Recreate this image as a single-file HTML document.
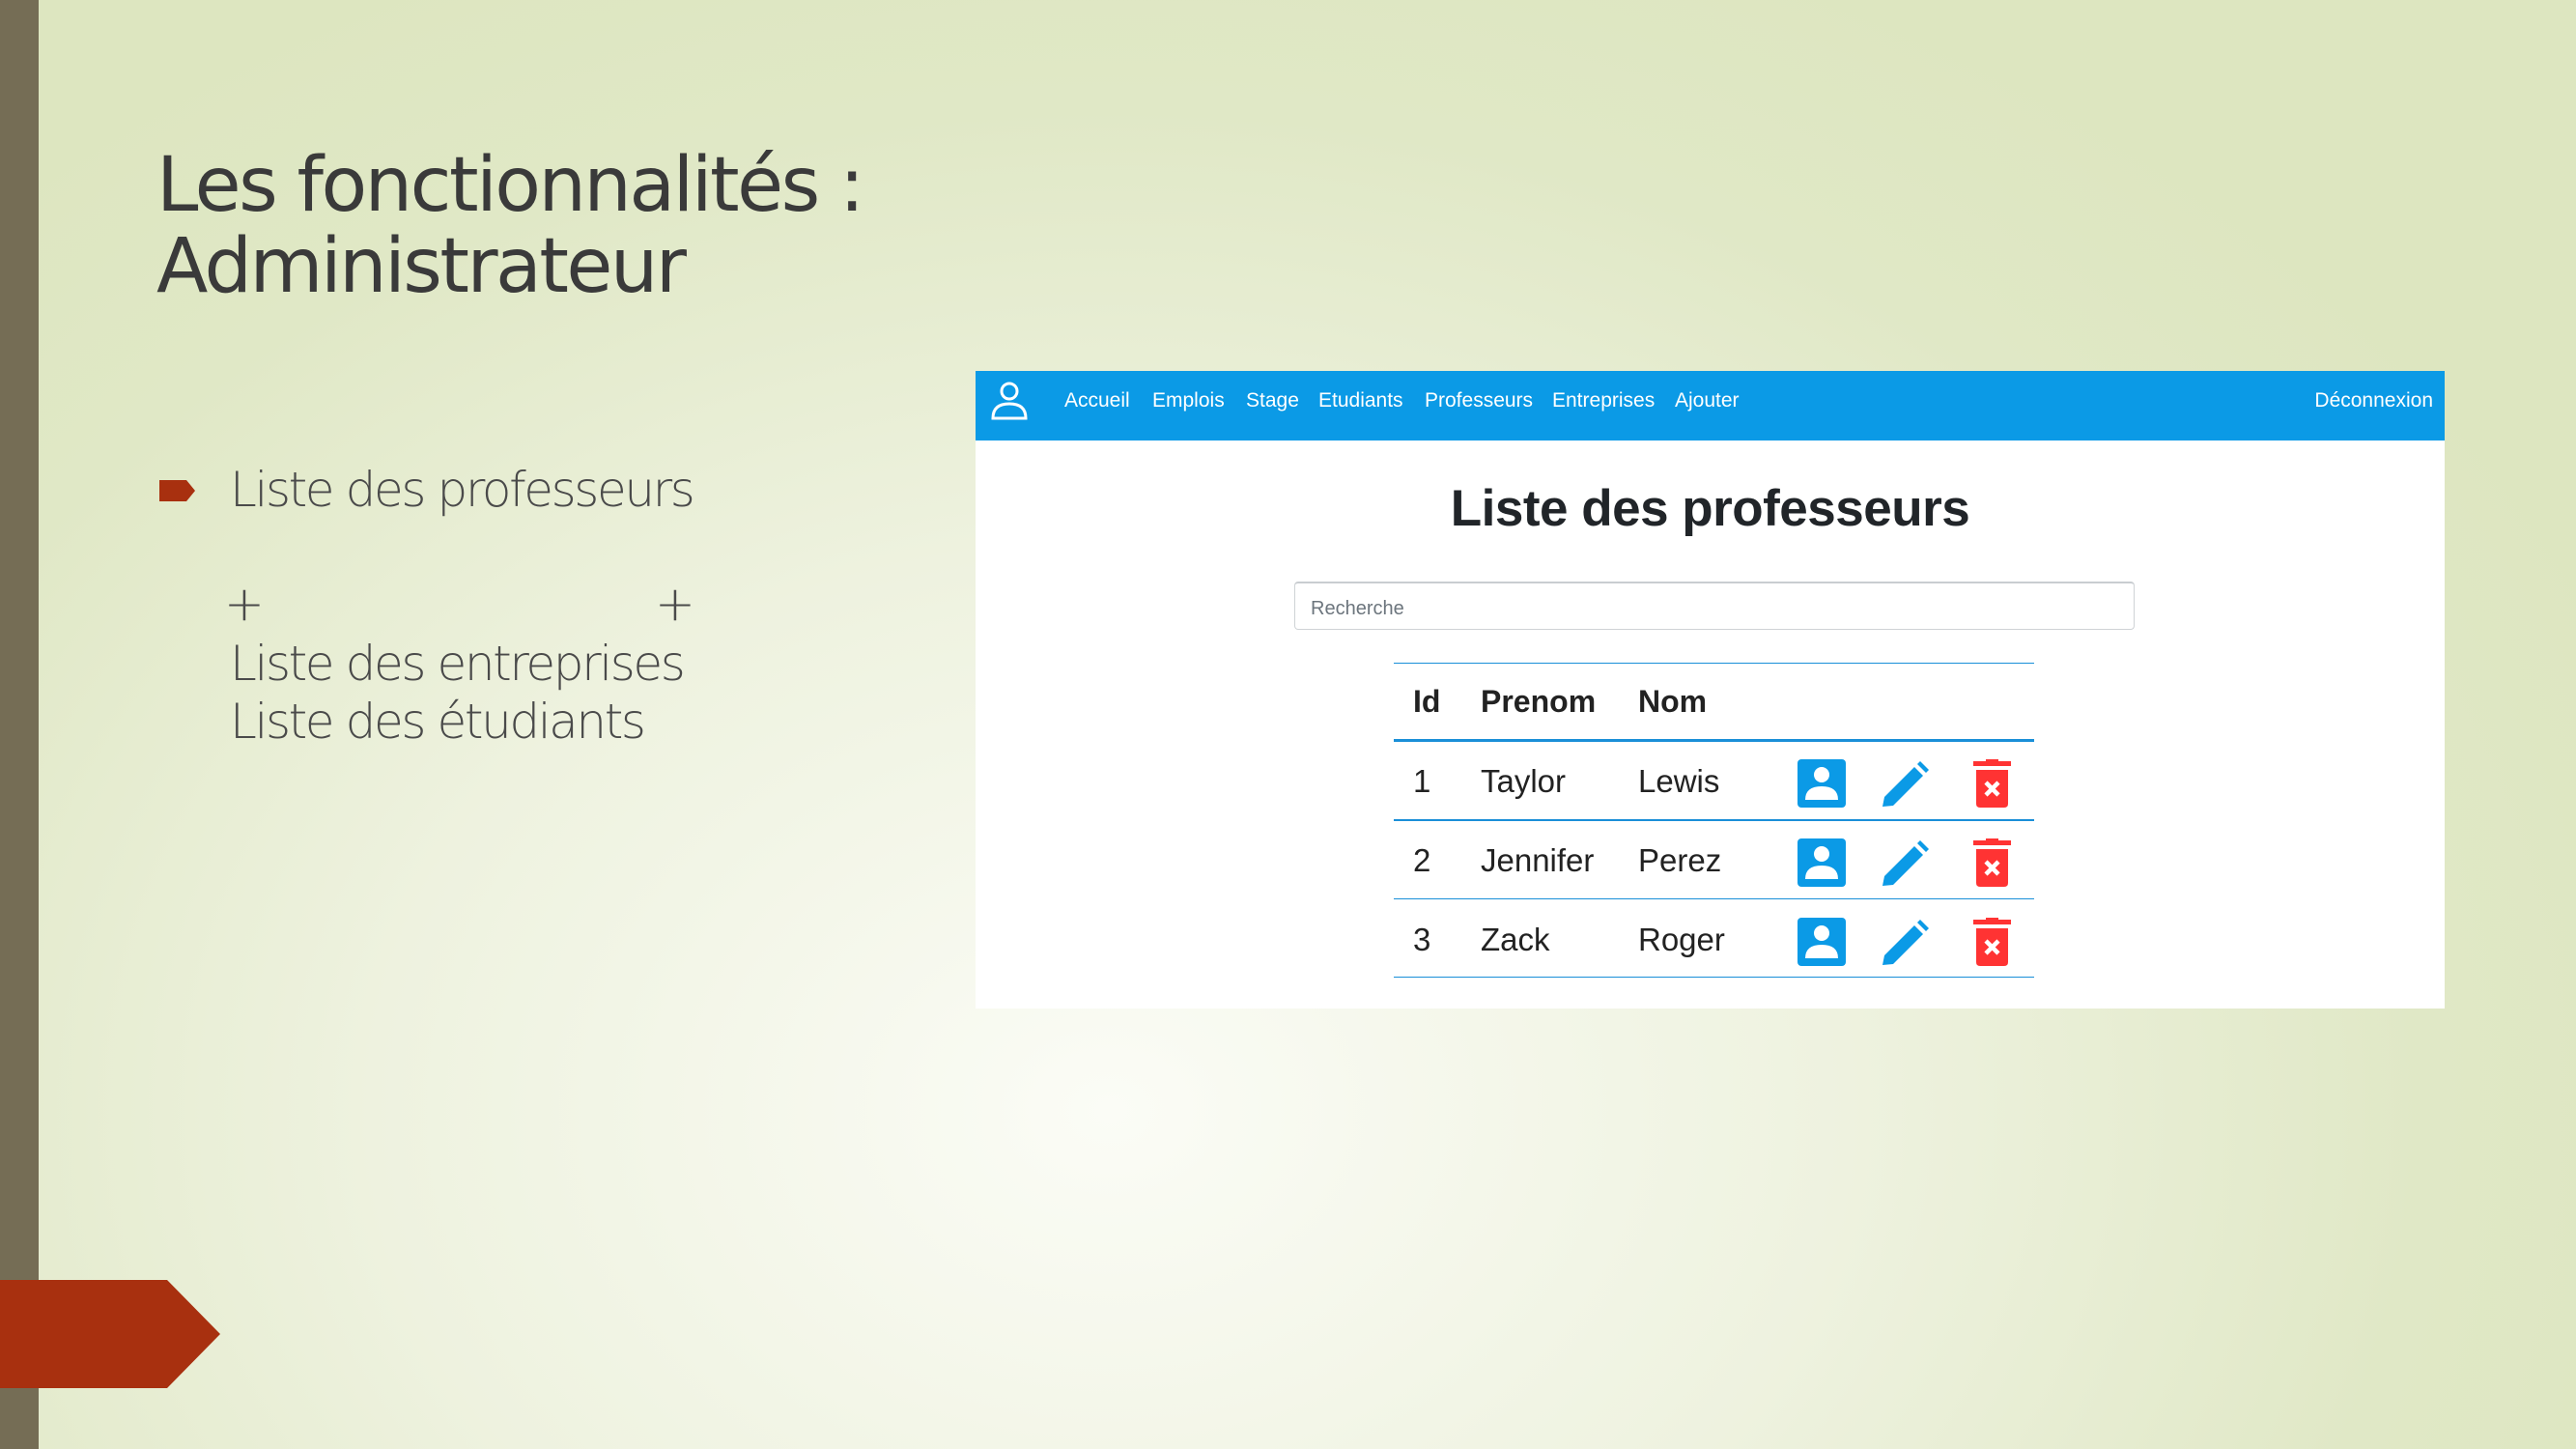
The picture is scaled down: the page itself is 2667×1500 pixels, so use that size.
<!DOCTYPE html>
<html><head><meta charset="utf-8"><style>
*{margin:0;padding:0;box-sizing:border-box}
body{width:2667px;height:1500px;overflow:hidden;position:relative;font-family:"DejaVu Sans","Liberation Sans",sans-serif;
background:radial-gradient(ellipse 1700px 1300px at 1150px 1150px,#fbfcf6 0%,#eef2df 45%,#e0e8c6 80%,#dde6c0 100%);}
.bar{position:absolute;left:0;top:0;width:40px;height:1500px;background:#756d55}
.arrow{position:absolute;left:0;top:1325px;width:228px;height:112px;background:#a8300f;clip-path:polygon(0 0,173px 0,228px 56px,173px 112px,0 112px)}
.t{position:absolute;color:#3a3a3a;font-weight:300;white-space:nowrap;letter-spacing:-1px}
.title{left:162px;top:150px;font-size:78px;line-height:84px;font-family:"DejaVu Sans",sans-serif;font-weight:normal;letter-spacing:-2.5px}
.b{font-size:50px;color:#4a4a4a;letter-spacing:-2.4px}
.bul{position:absolute;left:165px;top:497px;width:37px;height:22px;background:#a8300f;clip-path:polygon(0 0,28px 0,37px 11px,28px 22px,0 22px)}
.panel{position:absolute;left:1010px;top:384px;width:1521px;height:660px;background:#fff;font-family:"Liberation Sans",sans-serif}
.nav{height:72px;background:#0b9ae6;position:relative;color:#fff;font-size:21px}
.nav span{position:absolute;top:19px}
h1{position:absolute;left:0;width:100%;text-align:center;top:112px;font-size:53px;font-weight:bold;color:#212529;font-family:"Liberation Sans",sans-serif;letter-spacing:-0.5px}
.search{position:absolute;left:330px;top:218px;width:870px;height:50px;border:1px solid #cfd3d6;border-top:2px solid #c9cdd1;border-radius:4px;color:#6c757d;font-size:20px;padding:15px 16px}
.hl{position:absolute;left:433px;width:663px;background:#1a8fd8}
.c{position:absolute;font-size:33px;color:#222}
.h{font-weight:bold;font-size:32px}
svg{position:absolute}
</style></head><body>
<div class="bar"></div><div class="arrow"></div>
<div class="t title">Les fonctionnalités :<br>Administrateur</div>
<div class="bul"></div>
<div class="t b" style="left:238px;top:478px">Liste des professeurs</div>
<div class="t b" style="left:232px;top:596px">+</div>
<div class="t b" style="left:678px;top:596px">+</div>
<div class="t b" style="left:238px;top:658px">Liste des entreprises</div>
<div class="t b" style="left:238px;top:718px">Liste des étudiants</div>
<div class="panel">
<div class="nav">
<svg style="left:15px;top:10px" width="40" height="42" viewBox="0 0 40 42"><circle cx="20" cy="11" r="8" fill="none" stroke="#fff" stroke-width="3"/><path d="M3 39 Q3 24 20 24 Q37 24 37 39 Z" fill="none" stroke="#fff" stroke-width="3"/></svg>
<span style="left:92px">Accueil</span><span style="left:183px">Emplois</span><span style="left:280px">Stage</span><span style="left:355px">Etudiants</span><span style="left:465px">Professeurs</span><span style="left:597px">Entreprises</span><span style="left:724px">Ajouter</span><span style="right:12px">Déconnexion</span>
</div>
<h1>Liste des professeurs</h1>
<div class="search">Recherche</div>
<div class="hl" style="top:302px;height:1px"></div>
<div class="c h" style="left:453px;top:324px">Id</div>
<div class="c h" style="left:523px;top:324px">Prenom</div>
<div class="c h" style="left:686px;top:324px">Nom</div>
<div class="hl" style="top:381px;height:3px"></div>
<div class="c" style="left:453px;top:406px">1</div><div class="c" style="left:523px;top:406px">Taylor</div><div class="c" style="left:686px;top:406px">Lewis</div>
<div class="hl" style="top:464px;height:2px"></div>
<div class="c" style="left:453px;top:488px">2</div><div class="c" style="left:523px;top:488px">Jennifer</div><div class="c" style="left:686px;top:488px">Perez</div>
<div class="hl" style="top:546px;height:1px"></div>
<div class="c" style="left:453px;top:570px">3</div><div class="c" style="left:523px;top:570px">Zack</div><div class="c" style="left:686px;top:570px">Roger</div>
<div class="hl" style="top:627px;height:1px"></div>
</div>
<svg width="0" height="0"><defs>
<g id="u"><rect x="0" y="0" width="50" height="50" rx="4" fill="#0b9ae6"/><circle cx="25" cy="16" r="8" fill="#fff"/><path d="M8 42 Q8 28 25 28 Q42 28 42 42 Z" fill="#fff"/></g>
<g id="p"><path d="M0 46 L2 36 L33 5 L42 14 L11 45 Z" fill="#0b9ae6"/><path d="M36 2 L39 -1 L48 8 L45 11 Z" fill="#0b9ae6"/></g>
<g id="d"><rect x="0" y="2" width="39" height="5" fill="#f33"/><rect x="13" y="0" width="13" height="4" fill="#f33"/><path d="M3 11 H36 V46 Q36 50 32 50 H7 Q3 50 3 46 Z" fill="#f33"/><path d="M13 24 L26 37 M26 24 L13 37" stroke="#fff" stroke-width="4.5"/></g>
</defs></svg>
<svg style="left:1861px;top:786px" width="260" height="60"><use href="#u"/><use href="#p" x="88" y="3"/><use href="#d" x="182" y="0"/></svg>
<svg style="left:1861px;top:868px" width="260" height="60"><use href="#u"/><use href="#p" x="88" y="3"/><use href="#d" x="182" y="0"/></svg>
<svg style="left:1861px;top:950px" width="260" height="60"><use href="#u"/><use href="#p" x="88" y="3"/><use href="#d" x="182" y="0"/></svg>
</body></html>
